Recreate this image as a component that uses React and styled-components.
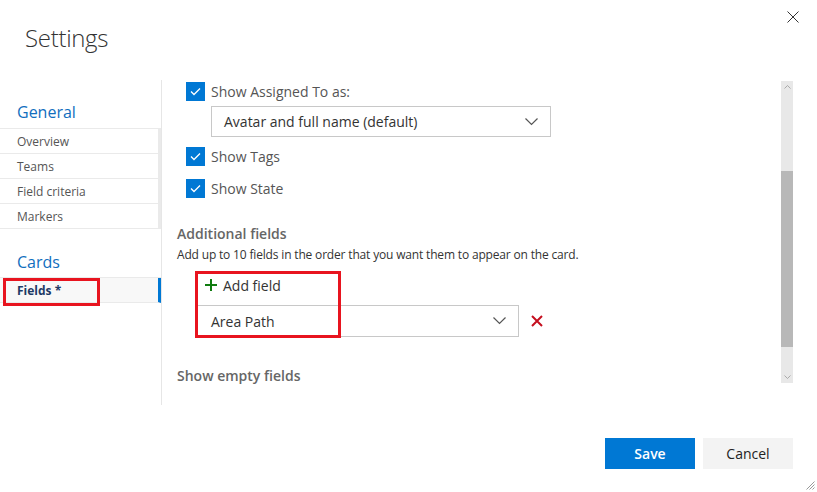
import React from 'react';
import styled, { createGlobalStyle } from 'styled-components';

const GlobalStyle = createGlobalStyle`
  html, body { margin: 0; padding: 0; background: #fff; }
  body { font-family: "Open Sans", "Noto Sans", Arial, sans-serif; color: #333; }
`;

const Dialog = styled.div`
  position: relative;
  width: 817px;
  height: 492px;
  background: #fff;
  display: flex;
  flex-direction: column;
  overflow: hidden;
`;

const Header = styled.div`
  height: 80px;
  display: flex;
  justify-content: space-between;
  align-items: flex-start;
  box-sizing: border-box;
  padding: 22px 17px 0 25px;
`;

const Title = styled.h1`
  margin: 0;
  font-size: 24px;
  line-height: 32px;
  font-weight: 300;
  color: #333;
  letter-spacing: -0.3px;
`;

const CloseButton = styled.button`
  border: 0;
  background: none;
  padding: 0;
  margin-top: -12px;
  width: 14px;
  height: 14px;
  display: flex;
  align-items: center;
  justify-content: center;
`;

const Body = styled.div`
  height: 325px;
  display: flex;
`;

const Nav = styled.nav`
  width: 161px;
  border-right: 1px solid #e6e6e6;
  padding-top: 22px;
`;

const NavGroupTitle = styled.div`
  font-size: 16px;
  line-height: 20px;
  color: #106ebe;
  padding-left: 17px;
  margin-top: ${p => (p.$gap ? '23px' : '0')};
  margin-bottom: ${p => (p.$gap ? '5px' : '6px')};
`;

const NavList = styled.ul`
  list-style: none;
  margin: 0;
  padding: 0;
  border-top: 1px solid #eaeaea;
`;

const NavItem = styled.li`
  position: relative;
  height: 24px;
  line-height: 25px;
  font-size: 12px;
  padding-left: 17px;
  border-bottom: 1px solid #eaeaea;
  border-right: 3px solid ${p => (p.$selected ? '#0078d4' : '#eaeaea')};
  background: ${p => (p.$selected ? '#f8f8f8' : '#fff')};
  color: ${p => (p.$selected ? '#1e3a66' : '#555')};
  font-weight: ${p => (p.$selected ? 700 : 400)};
`;

const Highlight = styled.div`
  position: absolute;
  border: 3px solid #e8141f;
  box-sizing: border-box;
  pointer-events: none;
`;

const Content = styled.div`
  flex: 1;
  display: flex;
  padding-right: 24px;
  padding-bottom: 20px;
`;

const Scroll = styled.div`
  position: relative;
  flex: 1;
  overflow: hidden;
  padding: 2px 0 0 15px;
`;

const CheckRow = styled.label`
  display: flex;
  align-items: center;
  gap: 6px;
  height: 19px;
  margin-left: 9px;
  margin-top: ${p => p.$top || 0}px;
  font-size: 14px;
  color: #555;
`;

const Box = styled.span`
  width: 19px;
  height: 19px;
  background: #0078d4;
  display: flex;
  align-items: center;
  justify-content: center;
`;

const Select = styled.div`
  display: flex;
  align-items: center;
  justify-content: space-between;
  box-sizing: border-box;
  width: ${p => p.$width}px;
  height: ${p => p.$height}px;
  margin-left: ${p => p.$left}px;
  margin-top: ${p => p.$top}px;
  border: 1px solid #c8c8c8;
  padding: 0 12px 0 ${p => p.$pad}px;
  font-size: 14px;
  color: #333;
`;

const SectionTitle = styled.div`
  font-size: 14px;
  font-weight: 600;
  color: #666;
  line-height: 18px;
  margin-top: ${p => p.$top}px;
`;

const Description = styled.div`
  font-size: 12px;
  color: #333;
  line-height: 16px;
  margin-top: 4px;
  letter-spacing: -0.17px;
`;

const AddField = styled.div`
  display: flex;
  align-items: center;
  gap: 6px;
  margin: 12px 0 0 28px;
  height: 20px;
  font-size: 14px;
  color: #333;
`;

const FieldRow = styled.div`
  display: flex;
  align-items: center;
  gap: 12px;
  margin-top: 10px;
`;

const Scrollbar = styled.div`
  width: 12px;
  margin-top: 1px;
  height: 302px;
  background: #e8e8e8;
  display: flex;
  flex-direction: column;
  align-items: center;
`;

const ScrollArrow = styled.div`
  height: 12px;
  display: flex;
  align-items: center;
  justify-content: center;
`;

const ScrollThumb = styled.div`
  width: 12px;
  height: 176px;
  background: #b8b8b8;
  margin-top: ${p => p.$top}px;
  margin-bottom: auto;
`;

const Footer = styled.div`
  display: flex;
  justify-content: flex-end;
  gap: 8px;
  padding: 33px 24px 0 0;
`;

const Button = styled.button`
  width: 90px;
  height: 31px;
  border: 0;
  font-family: inherit;
  font-size: 14px;
  font-weight: ${p => (p.$primary ? 600 : 400)};
  background: ${p => (p.$primary ? '#0078d4' : '#f3f3f3')};
  color: ${p => (p.$primary ? '#fff' : '#222')};
`;

const Grip = styled.svg`
  position: absolute;
  right: 2px;
  bottom: 2px;
`;

const Chevron = () => (
  <svg width="13" height="8" viewBox="0 0 13 8">
    <polyline points="0.5,0.5 6.5,6.5 12.5,0.5" fill="none" stroke="#555" strokeWidth="1.2" />
  </svg>
);

const Check = () => (
  <svg width="11" height="9" viewBox="0 0 11 9">
    <polyline points="1,4.5 4,7.5 10,1.5" fill="none" stroke="#fff" strokeWidth="1.3" />
  </svg>
);

const Checkbox = ({ label, top }) => (
  <CheckRow $top={top}>
    <Box><Check /></Box>
    {label}
  </CheckRow>
);

export default function App() {
  return (
    <>
      <GlobalStyle />
      <Dialog>
        <Header>
          <Title>Settings</Title>
          <CloseButton aria-label="Close">
            <svg width="12" height="12" viewBox="0 0 12 12">
              <path d="M0.5 0.5 L11.5 11.5 M11.5 0.5 L0.5 11.5" stroke="#333" strokeWidth="1" />
            </svg>
          </CloseButton>
        </Header>

        <Body>
          <Nav>
            <NavGroupTitle>General</NavGroupTitle>
            <NavList>
              <NavItem>Overview</NavItem>
              <NavItem>Teams</NavItem>
              <NavItem>Field criteria</NavItem>
              <NavItem>Markers</NavItem>
            </NavList>
            <NavGroupTitle $gap>Cards</NavGroupTitle>
            <NavList>
              <NavItem $selected>
                Fields *
                <Highlight style={{ left: 3, top: 0, width: 97, height: 28 }} />
              </NavItem>
            </NavList>
          </Nav>

          <Content>
            <Scroll>
              <Checkbox label="Show Assigned To as:" top={0} />
              <Select $width={340} $height={31} $left={34} $top={5} $pad={12}>
                Avatar and full name (default)
                <Chevron />
              </Select>
              <Checkbox label="Show Tags" top={10} />
              <Checkbox label="Show State" top={13} />

              <SectionTitle $top={27}>Additional fields</SectionTitle>
              <Description>Add up to 10 fields in the order that you want them to appear on the card.</Description>
              <AddField>
                <svg width="12" height="12" viewBox="0 0 12 12">
                  <path d="M6 0 V12 M0 6 H12" stroke="#107c10" strokeWidth="2" />
                </svg>
                Add field
              </AddField>
              <FieldRow>
                <Select $width={323} $height={32} $left={19} $top={0} $pad={14}>
                  Area Path
                  <Chevron />
                </Select>
                <svg width="12" height="12" viewBox="0 0 12 12">
                  <path d="M1 1 L11 11 M11 1 L1 11" stroke="#c50f1f" strokeWidth="2" />
                </svg>
              </FieldRow>
              <SectionTitle $top={30}>Show empty fields</SectionTitle>

              <Highlight style={{ left: 33, top: 191, width: 146, height: 67 }} />
            </Scroll>

            <Scrollbar>
              <ScrollArrow>
                <svg width="7" height="4" viewBox="0 0 7 4">
                  <polyline points="0.5,3.5 3.5,0.5 6.5,3.5" fill="none" stroke="#999" strokeWidth="0.8" />
                </svg>
              </ScrollArrow>
              <ScrollThumb $top={78} />
              <ScrollArrow>
                <svg width="7" height="4" viewBox="0 0 7 4">
                  <polyline points="0.5,0.5 3.5,3.5 6.5,0.5" fill="none" stroke="#999" strokeWidth="0.8" />
                </svg>
              </ScrollArrow>
            </Scrollbar>
          </Content>
        </Body>

        <Footer>
          <Button $primary>Save</Button>
          <Button>Cancel</Button>
        </Footer>

        <Grip width="10" height="10" viewBox="0 0 10 10">
          <path d="M9.5 1.5 L1.5 9.5 M9.5 4.5 L4.5 9.5 M9.5 7.5 L7.5 9.5" stroke="#999" strokeWidth="1" />
        </Grip>
      </Dialog>
    </>
  );
}
